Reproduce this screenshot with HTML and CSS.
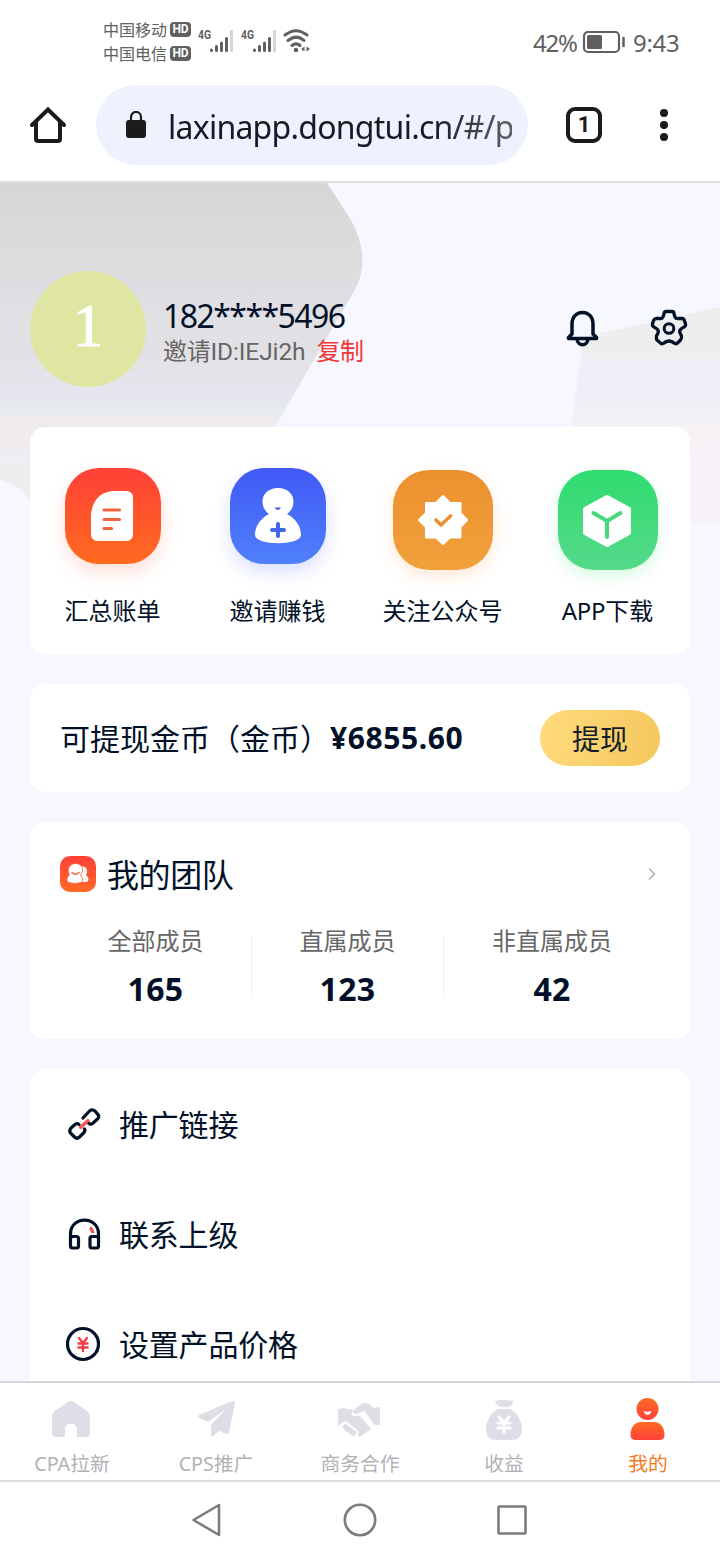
FILE: index.html
```html
<!DOCTYPE html>
<html lang="zh-CN">
<head>
<meta charset="utf-8">
<title>我的</title>
<link rel="stylesheet" href="styles.css">
</head>
<body>
<div class="phone">
  <header class="status">
    <div class="carriers">
      <div class="carrier"><span>中国移动</span><b class="hd">HD</b></div>
      <div class="carrier"><span>中国电信</span><b class="hd">HD</b></div>
    </div>
    <svg class="signals" width="116" height="30" viewBox="0 0 116 30">
      <g class="net"><text x="0" y="13" textLength="13" lengthAdjust="spacingAndGlyphs">4G</text><text x="43" y="13" textLength="13" lengthAdjust="spacingAndGlyphs">4G</text></g>
      <g fill="none" stroke="#606060" stroke-width="3" stroke-linecap="round">
        <path d="M13.500 24v.5M18.500 20.500v4M23.500 17v7.500M28.500 12.500v12M56.500 24v.5M61.500 20.500v4M66.500 17v7.500M71.500 12.500v12"/>
        <path stroke="#d6d6d6" stroke-linecap="butt" d="M33.500 4v22M76.500 4v22"/>
        <path d="M87 9C94 3.500 102 3.500 109 9M90 14.500C95.500 10 101 10 106 14.500M94 19.500C97 17 99 17 102 19.500"/>
      </g>
      <circle cx="98" cy="24" r="2.300" fill="#606060"/>
      <path fill="#606060" d="M106.500 20.500v5l-3.500-2.500zM108.500 20.500v5l3.500-2.500z"/>
    </svg>
    <div class="power">
      <span class="pct">42%</span>
      <svg width="44" height="24" viewBox="0 0 44 24"><rect x="2" y="1" width="35" height="20" rx="4" fill="none" stroke="#606060" stroke-width="2.200"/><rect x="5" y="4" width="15" height="14" rx="1.500" fill="#606060"/><path d="M41.500 7v8" stroke="#606060" stroke-width="2.500" stroke-linecap="round"/></svg>
      <span class="clock">9:43</span>
    </div>
  </header>

  <div class="browser">
    <svg class="home" width="36" height="38" viewBox="0 0 36 38" fill="none" stroke="#1b1b1b" stroke-width="4" stroke-linejoin="round" stroke-linecap="round"><path d="M2 19L18 3.500 34 19M6 16v17q0 2 2 2h20q2 0 2-2V16" stroke-linejoin="miter"/></svg>
    <div class="address">
      <svg width="20" height="28" viewBox="0 0 20 28"><rect y="9" width="20" height="18" rx="3" fill="#1b1b1b"/><path d="M5 10V6a5 5 0 0 1 10 0v4" fill="none" stroke="#1b1b1b" stroke-width="2.200"/></svg>
      <span class="url">laxinapp.dongtui.cn/#/p</span>
    </div>
    <div class="tabs-count">1</div>
    <svg class="more" width="8" height="32" viewBox="0 0 8 32" fill="#1b1b1b"><circle cx="4" cy="4" r="4"/><circle cx="4" cy="16" r="4"/><circle cx="4" cy="28" r="4"/></svg>
  </div>

  <main class="page">
    <svg class="backdrop" width="720" height="350" viewBox="0 183 720 350">
      <defs>
        <linearGradient id="left" gradientUnits="userSpaceOnUse" x1="0" y1="183" x2="0" y2="493">
          <stop offset="0" stop-color="#d6d6d6"/><stop offset=".14" stop-color="#dbd9db"/><stop offset=".28" stop-color="#dedddd"/><stop offset=".34" stop-color="#dcdde3"/><stop offset=".43" stop-color="#e1e0e5"/><stop offset=".55" stop-color="#e3e1e4"/><stop offset=".61" stop-color="#e3e3e9"/><stop offset=".69" stop-color="#e5e6ef"/><stop offset=".73" stop-color="#e6ebed"/><stop offset=".76" stop-color="#efeaee"/><stop offset=".86" stop-color="#f0ebee"/><stop offset=".88" stop-color="#edeef6"/><stop offset=".93" stop-color="#eeeeef"/>
        </linearGradient>
        <linearGradient id="right" gradientUnits="userSpaceOnUse" x1="0" y1="307" x2="0" y2="525">
          <stop offset="0" stop-color="#eee"/><stop offset=".23" stop-color="#eee"/><stop offset=".24" stop-color="#eeeff7"/><stop offset=".4" stop-color="#eeeff6"/><stop offset=".5" stop-color="#eff1f5"/><stop offset=".55" stop-color="#f6f2f6"/><stop offset="1" stop-color="#f7f3f9"/>
        </linearGradient>
      </defs>
      <path fill="url(#left)" d="M0 183H327L351 220Q370 255 357 286L275 427 230 500H30Q18 484 0 480z"/>
      <path fill="url(#right)" d="M720 307L597 334Q584 337 582 350L571 427V525H720z"/>
    </svg>

    <section class="profile">
      <div class="avatar">1</div>
      <div class="who">
        <div class="phone-no">182****5496</div>
        <div class="invite"><span>邀请<i class="code">ID:IEJi2h</i></span><a class="copy">复制</a></div>
      </div>
      <svg class="bell" width="34" height="38" viewBox="0 0 34 38" fill="none" stroke="#021127" stroke-width="3.500" stroke-linejoin="round"><path d="M6 25V14C6 -1.500 27 -1.500 27 14V24L30.500 27.500V28.500H2.500V27.500L6 24"/><path d="M11 29C11.500 36.500 21.500 36.500 22 29"/></svg>
      <svg class="gear" width="38" height="38" viewBox="0 0 38 38" fill="none" stroke="#021127" stroke-width="3.300" stroke-linejoin="round"><path d="M16 2.500H22Q24 2.500 24 5L25 8Q26 10 29 9.500L32 9.500Q34 9.500 34.500 12L35.500 15Q36 17 34 18L31 20Q29 21.500 30 24L31.500 27Q32 29 30.500 31L27.500 34Q26 35.500 24 34L21.500 32.500Q19 31.500 16.500 32.500L14 34Q12 35.500 10.500 34L7 31Q6 29.500 6.500 27L8 24Q9 21.500 7 20L4 18Q2 17 2.500 15L3.500 11.500Q4.500 9.500 6.500 9.500L9 9.500Q12 10 13 8L14 5Q14 2.500 16 2.500z"/><circle cx="19" cy="19.500" r="4.800" stroke-width="3"/></svg>
    </section>

    <section class="card quick">
      <div class="entry">
        <div class="slot"><div class="tile bill"><svg width="42" height="50" viewBox="0 0 42 50"><path fill="#fff" d="M24 0H35Q42 0 42 7V43Q42 50 35 50H7Q0 50 0 43V24C1 9 10 0 24 0z"/><path d="M13 19H28.500M13 28.500H28.500M13 37.500H20.500" stroke="#f0653d" stroke-width="3.200" stroke-linecap="round"/></svg></div></div>
        <span>汇总账单</span>
      </div>
      <div class="entry">
        <div class="slot"><div class="tile earn"><svg width="46" height="56" viewBox="0 0 46 56"><path fill="#fff" d="M23 0C40 0 43 18 32 26C42 31 46 40 46 47C46 58 0 58 0 47C0 40 4 31 14 26C3 18 6 0 23 0z"/><path fill="#3f5ce8" d="M19.500 19.500h6.500q-3.200 5-6.500 0z"/><path d="M23 36V48M17 42H29" stroke="#4267ea" stroke-width="4" stroke-linecap="round"/></svg></div></div>
        <span>邀请赚钱</span>
      </div>
      <div class="entry">
        <div class="slot"><div class="tile follow"><svg width="50" height="50" viewBox="0 0 50 50"><path fill="#fff" stroke="#fff" stroke-width="2" stroke-linejoin="round" d="M25 1L32 8H42.500V18L49 25L42.500 32V42.500H32L25 49L18 42.500H8V32L1 25L8 18V8H18z"/><path d="M18 25L23 30L32.500 21" fill="none" stroke="#e99132" stroke-width="3.600" stroke-linecap="round" stroke-linejoin="round"/></svg></div></div>
        <span>关注公众号</span>
      </div>
      <div class="entry">
        <div class="slot"><div class="tile app"><svg width="48" height="52" viewBox="0 0 48 52"><path fill="#fff" stroke="#fff" stroke-width="4" stroke-linejoin="round" d="M24 2L46 14V38L24 50L2 38V14z"/><path d="M10.500 18L24 26L37.500 18M24 26V42" fill="none" stroke="#48d77c" stroke-width="4" stroke-linecap="round"/></svg></div></div>
        <span><i class="latin app-word">APP</i>下载</span>
      </div>
    </section>

    <section class="card balance">
      <span class="caption">可提现金币（金币）</span><b class="amount">¥6855.60</b>
      <button class="withdraw">提现</button>
    </section>

    <section class="card team">
      <div class="team-head">
        <div class="team-icon"><svg width="24" height="22" viewBox="0 0 24 22"><path fill="#fff" d="M14 4C20 2 23 8 20 12C23 15 23.500 18 20 19H14z"/><path fill="#fff" stroke="#ff5732" stroke-width=".8" d="M9.500 .500C17 .500 18.500 8 14.500 12Q18 15 16 19.500Q9 21.500 2.500 19.500C-.500 18 1 14 3.500 12C.500 7.500 3 .500 9.500 .500z"/><path d="M6 9.500Q9.500 13 13 9.500" fill="none" stroke="#ff5732" stroke-width="1.500" stroke-linecap="round"/></svg></div>
        <h2>我的团队</h2>
        <svg class="chevron" width="8" height="14" viewBox="0 0 8 14" fill="none" stroke="#aaa" stroke-width="1.400"><path d="M1 1.500L6.500 7L1 12.500"/></svg>
      </div>
      <div class="stats">
        <div class="stat"><span>全部成员</span><b>165</b></div>
        <div class="stat"><span>直属成员</span><b>123</b></div>
        <div class="stat"><span>非直属成员</span><b>42</b></div>
      </div>
    </section>

    <section class="card menu">
      <div class="row"><svg width="36" height="36" viewBox="0 0 36 36" fill="none" stroke="#021127" stroke-width="3.200" stroke-linecap="round" stroke-linejoin="round"><path d="M17 12L24 4.500Q26.500 3 29 5L31.500 8Q34 10.500 31.500 13L26.500 17.500Q24.500 19 22.500 17M13 18.500Q11.500 16.500 9 18.500L5 22Q2.500 25 5 27.500L8.500 31Q11 33.500 13.500 31L18 26.500Q19.500 24.500 18.500 23"/><path d="M14.500 21.500L22 14.500" stroke="#f55550"/></svg><span>推广链接</span></div>
      <div class="row"><svg width="36" height="36" viewBox="0 0 36 36" fill="none" stroke="#021127" stroke-width="3.200" stroke-linejoin="round"><path d="M4.500 23V18C4.500 -.500 32.500 -.500 32.500 18V23"/><rect x="4.500" y="20.500" width="8" height="11.500" rx="2"/><rect x="24" y="20.500" width="8.500" height="11.500" rx="2"/><path d="M24 11.500Q26.500 13.500 27 17" stroke="#f55550"/></svg><span>联系上级</span></div>
      <div class="row"><svg width="36" height="36" viewBox="0 0 36 36" fill="none"><circle cx="17" cy="18" r="15.500" stroke="#021127" stroke-width="3.200"/><path d="M13 12L17 17L21 12M17 17V25M12.500 17.500H21.500M12.500 21.500H21.500" stroke="#f33f42" stroke-width="2.400" stroke-linecap="round"/></svg><span>设置产品价格</span></div>
    </section>
  </main>

  <nav class="tabbar">
    <div class="tab"><svg width="46" height="46" viewBox="1 0 46 46"><path fill="#dedee7" d="M20 4Q23 1.500 26 4L39 13Q42 15 42 18V35Q42 39 38 39H29V31C29 24 17 24 17 31V39H8Q4 39 4 35V18Q4 15 7 13z"/></svg><span><i class="latin">CPA</i>拉新</span></div>
    <div class="tab"><svg width="46" height="46" viewBox="1 0 46 46"><path fill="#dedee7" d="M40 3Q43 2 43 5L37 35Q36.500 37 34 36L27 33L21 38Q19 39 19 36V27L34 11L16 24L7 20Q5 19 7 17z"/></svg><span><i class="latin">CPS</i>推广</span></div>
    <div class="tab"><svg width="46" height="46" viewBox="1 0 46 46"><path fill="#dedee7" d="M2 11L8 10Q12 12 16 11L17 13Q14 16 17 18Q19 19 23 17L35 31Q31 34 29 35Q26 39 22 38L22 33L10 23Q6 24 2 28z"/><path fill="#dedee7" d="M17 13L25 6Q28 4 33 6L38 10L44 9V27L38 27L28 13L21 16Q18 17 17 13z"/><path d="M22.500 17L28 14L38 28" fill="none" stroke="#fff" stroke-width="2.200"/><path d="M9.500 29L18 35.500" stroke="#fff" stroke-width="9" stroke-linecap="round"/><path d="M9.500 29L17.500 35" stroke="#dedee7" stroke-width="5.500" stroke-linecap="round"/></svg><span>商务合作</span></div>
    <div class="tab"><svg width="46" height="46" viewBox="0 0 46 46"><path fill="#dedee7" d="M14 3Q23 1 32 3Q32 8 27 9H20Q15 8 14 3zM17 11H29C37 15 41 24 41 31C41 39 36 42 31 42H15C9 42 5 39 5 31C5 24 9 15 17 11z"/><path d="M18 19L23 25L28 19M23 25V34M17 25H29M17 30H29" fill="none" stroke="#fff" stroke-width="3" stroke-linecap="round"/></svg><span>收益</span></div>
    <div class="tab active"><svg width="46" height="46" viewBox="0 0 46 46"><defs><linearGradient id="me" x1="0" y1="0" x2="0" y2="1"><stop stop-color="#ff6c22"/><stop offset="1" stop-color="#ff403a"/></linearGradient></defs><circle cx="22.500" cy="11" r="11" fill="url(#me)"/><path fill="url(#me)" d="M16 24H29C36 24 39 30 39.500 36Q40 42 34 42H11Q5 42 5.500 36C6 30 9 24 16 24z"/><path fill="#fff" d="M18.500 13Q22.500 14.500 26.500 13Q25 17 22.500 17T18.500 13z"/></svg><span>我的</span></div>
  </nav>

  <footer class="sysnav">
    <svg width="336" height="36" viewBox="0 0 336 36" fill="none" stroke="#7c7c7c" stroke-width="2.600" stroke-linejoin="round"><path d="M27 3V33L1.500 18z"/><circle cx="168" cy="18" r="15.200"/><rect x="306.500" y="4.500" width="27" height="27" rx="1"/></svg>
  </footer>
</div>
</body>
</html>
```
FILE: styles.css
```css
* { box-sizing: border-box; }
body { margin: 0; background: #fff; font-family: "Noto Sans CJK SC", sans-serif; color: #021127; }
svg { display: block; flex: none; }
i { font-style: normal; }
.phone { width: 720px; height: 1560px; display: flex; flex-direction: column; overflow: hidden; background: #fff; }

.status { height: 84px; flex: none; display: flex; align-items: flex-start; padding: 17px 40px 0 103px; color: #606060; }
.carriers { width: 95px; display: flex; flex-direction: column; }
.carrier { height: 24px; display: flex; align-items: center; gap: 3px; font-size: 16px; line-height: 24px; }
.hd { width: 21px; height: 15px; border-radius: 4px; background: #606060; color: #fff; font: bold 12px/15px Roboto, sans-serif; text-align: center; }
.signals { margin-top: 9px; }
.net { font: bold 13px Roboto, sans-serif; fill: #606060; }
.power { margin-left: auto; margin-top: 11px; height: 30px; display: flex; align-items: center; font: 24px/30px "Noto Sans", sans-serif; white-space: nowrap; }
.pct { width: 49px; letter-spacing: -1.200px; }
.clock { width: 47px; margin-left: 7px; letter-spacing: -.3px; }

.browser { height: 99px; flex: none; display: flex; align-items: center; padding: 0 56px 15px 30px; border-bottom: 2px solid #dedfe1; }
.address { width: 432px; height: 80px; margin-left: 30px; padding: 0 16px 0 30px; border-radius: 40px; background: #eef2ff; display: flex; align-items: center; gap: 22px; }
.url { width: 344px; overflow: hidden; white-space: nowrap; font: 32px/48px "Noto Sans", sans-serif; letter-spacing: -.75px; color: transparent; background: linear-gradient(90deg, #171a22 76%, #5d6069); background-clip: text; -webkit-background-clip: text; padding-top: 3px; }
.tabs-count { width: 36px; height: 36px; margin-left: 38px; border: 4px solid #1b1b1b; border-radius: 9px; font: bold 22px/28px Roboto, sans-serif; text-align: center; color: #1b1b1b; }
.more { margin-left: auto; margin-right: -4px; }

.page { height: 1198px; flex: none; position: relative; overflow: hidden; background: #f6f7ff; padding: 0 30px; display: flex; flex-direction: column; gap: 30px; }
.backdrop { position: absolute; left: 0; top: 0; }
.profile { position: relative; height: 244px; margin-bottom: -30px; padding-top: 88px; display: flex; align-items: flex-start; flex: none; }
.avatar { width: 116px; height: 116px; border-radius: 50%; background: #dee6a2; color: #fff; font: 61px/110px "Liberation Serif", serif; text-align: center; -webkit-text-stroke: 1px #fff; }
.who { width: 403px; margin-left: 17px; padding-top: 26px; }
.phone-no { font: 32px/38px "Noto Sans", sans-serif; letter-spacing: -1.550px; }
.invite { margin-top: 2px; font-size: 24px; line-height: 25px; color: #666; display: flex; gap: 11px; white-space: nowrap; letter-spacing: -.3px; }
.code { font-family: Roboto, sans-serif; font-size: 24.500px; letter-spacing: -.1px; }
.copy { color: #f43535; letter-spacing: -.5px; }
.bell { margin: 39px 0 0 0; }
.gear { margin: 38px 0 0 50px; }

.card { position: relative; flex: none; border-radius: 15px; background: #fff; }
.quick { height: 227px; padding-top: 41px; display: grid; grid-template-columns: repeat(4, 165px); }
.entry { display: flex; flex-direction: column; align-items: center; font-size: 24px; line-height: 36px; }
.slot { height: 124px; }
.tile { width: 96px; height: 96px; border-radius: 34px; display: flex; align-items: center; justify-content: center; }
.bill { background: linear-gradient(#ff4037, #ff6b20); box-shadow: 0 8px 18px #ff613f33; padding: 0 2px 1px 0; }
.earn { background: linear-gradient(#4059f6, #4f80fa); box-shadow: 0 8px 18px #4965ff33; padding-bottom: 1px; }
.follow, .app { width: 100px; height: 100px; margin-top: 2px; border-radius: 36px; }
.follow { background: linear-gradient(#ec902f, #f1a13b); box-shadow: 0 6px 16px #ff882d30; }
.app { background: linear-gradient(#2fdc6e, #56d98a); box-shadow: 0 6px 16px #35df7130; padding: 2px 2px 0 0; }
.app-word { letter-spacing: -.3px; }
.latin { font-family: "Noto Sans", sans-serif; }

.balance { height: 108px; padding: 0 30px; display: flex; align-items: center; font-size: 30px; line-height: 44px; white-space: nowrap; }
.caption { margin-top: -3px; }
.amount { font-family: "Noto Sans", sans-serif; font-size: 30px; letter-spacing: .6px; }
.withdraw { width: 120px; height: 56px; margin-left: auto; padding: 0; border: 0; border-radius: 28px; background: linear-gradient(100deg, #ffdb7d, #f5c75c); color: #101c2a; font: 28px/56px "Noto Sans CJK SC", sans-serif; }

.team { height: 217px; padding: 30px 30px 0; }
.team-head { height: 44px; display: flex; align-items: center; }
.team-icon { width: 36px; height: 36px; border-radius: 10px; background: linear-gradient(#ff4038, #ff6926); display: flex; align-items: center; justify-content: center; }
.team h2 { margin: -2px 0 0 11px; font-size: 32px; font-weight: 400; line-height: 44px; letter-spacing: -.4px; }
.chevron { margin-left: auto; margin-right: 4px; }
.stats { margin-top: 40px; height: 62px; display: grid; grid-template-columns: 192px 192px 216px; grid-template-rows: 62px; }
.stat { display: flex; flex-direction: column; align-items: center; border-right: 1px solid #f0f0f0; }
.stat:last-child { border: 0; }
.stat span { margin-top: -14px; font-size: 24px; line-height: 36px; color: #666; }
.stat b { margin-top: 9px; font: bold 32px/44px "Noto Sans", sans-serif; letter-spacing: .3px; }

.menu { height: 400px; }
.row { height: 110px; padding-left: 36px; display: flex; align-items: center; gap: 17px; font-size: 30px; line-height: 44px; letter-spacing: -.2px; }
.row span { margin-top: -2px; }
.row svg { margin-top: -1px; }

.tabbar { height: 101px; flex: none; border-top: 2px solid #d6d6db; border-bottom: 2px solid #e0e0e0; display: grid; grid-template-columns: repeat(5, 144px); }
.tab { padding-top: 15px; display: flex; flex-direction: column; align-items: center; font-size: 19.800px; line-height: 28px; color: #b2b2b5; }
.tab span { margin-top: 5px; }
.tab .latin { letter-spacing: -.1px; }
.tab.active { color: #f57a1c; }
.sysnav { flex: 1; display: flex; justify-content: center; align-items: center; padding-bottom: 2px; }
```
